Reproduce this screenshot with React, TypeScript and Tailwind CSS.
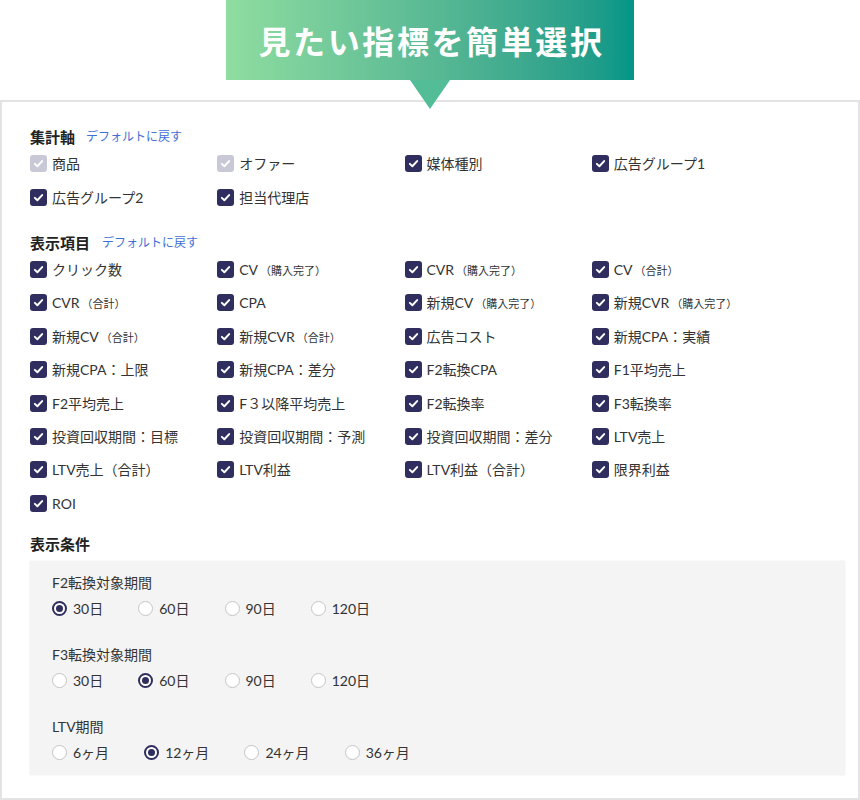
import React from "react";

type Item = { label: React.ReactNode; disabled?: boolean };

const Small = ({ children }: { children: React.ReactNode }) => (
  <span className="text-[11px] ml-[2px]">{children}</span>
);

const axisItems: Item[] = [
  { label: "商品", disabled: true },
  { label: "オファー", disabled: true },
  { label: "媒体種別" },
  { label: "広告グループ1" },
  { label: "広告グループ2" },
  { label: "担当代理店" },
];

const displayItems: Item[] = [
  { label: "クリック数" },
  { label: <>CV<Small>（購入完了）</Small></> },
  { label: <>CVR<Small>（購入完了）</Small></> },
  { label: <>CV<Small>（合計）</Small></> },
  { label: <>CVR<Small>（合計）</Small></> },
  { label: "CPA" },
  { label: <>新規CV<Small>（購入完了）</Small></> },
  { label: <>新規CVR<Small>（購入完了）</Small></> },
  { label: <>新規CV<Small>（合計）</Small></> },
  { label: <>新規CVR<Small>（合計）</Small></> },
  { label: "広告コスト" },
  { label: "新規CPA：実績" },
  { label: "新規CPA：上限" },
  { label: "新規CPA：差分" },
  { label: "F2転換CPA" },
  { label: "F1平均売上" },
  { label: "F2平均売上" },
  { label: "F３以降平均売上" },
  { label: "F2転換率" },
  { label: "F3転換率" },
  { label: "投資回収期間：目標" },
  { label: "投資回収期間：予測" },
  { label: "投資回収期間：差分" },
  { label: "LTV売上" },
  { label: "LTV売上（合計）" },
  { label: "LTV利益" },
  { label: "LTV利益（合計）" },
  { label: "限界利益" },
  { label: "ROI" },
];

const CheckBox = ({ disabled }: { disabled?: boolean }) => (
  <span
    className={
      "flex h-[17px] w-[17px] shrink-0 items-center justify-center rounded-[3px] " +
      (disabled ? "bg-[#c9c8d6]" : "bg-[#2f2e5f]")
    }
  >
    <svg width="13" height="13" viewBox="0 0 16 16" fill="none">
      <path
        d="M3.5 8.5 L6.6 11.4 L12.5 5"
        stroke="white"
        strokeWidth="2.4"
        strokeLinecap="round"
        strokeLinejoin="round"
      />
    </svg>
  </span>
);

const CheckGrid = ({ items }: { items: Item[] }) => (
  <div className="grid w-[749px] grid-cols-4 auto-rows-[33.4px]">
    {items.map((it, i) => (
      <div key={i} className="flex items-center gap-[5px]">
        <CheckBox disabled={it.disabled} />
        <span className="whitespace-nowrap text-[14px] text-[#333]">{it.label}</span>
      </div>
    ))}
  </div>
);

const Title = ({ text, link, wide }: { text: string; link?: boolean; wide?: boolean }) => (
  <div className={"flex h-[20px] items-center " + (wide ? "gap-[12px]" : "gap-[11px]")}>
    <span className="text-[15px] font-bold text-[#222]">{text}</span>
    {link && <span className="text-[12px] text-[#3f6fd6]">デフォルトに戻す</span>}
  </div>
);

const Radio = ({ checked }: { checked?: boolean }) =>
  checked ? (
    <span className="flex h-[15px] w-[15px] shrink-0 items-center justify-center rounded-full border-2 border-[#2f2e5f] bg-white">
      <span className="h-[7px] w-[7px] rounded-full bg-[#2f2e5f]" />
    </span>
  ) : (
    <span className="h-[15px] w-[15px] shrink-0 rounded-full border border-[#c4c4c4] bg-white" />
  );

const RadioGroup = ({
  label,
  options,
  selected,
  first,
  wide,
}: {
  label: string;
  options: string[];
  selected: number;
  first?: boolean;
  wide?: boolean;
}) => (
  <div className={first ? "" : "mt-[26px]"}>
    <div className="flex h-[20px] items-center text-[14px] text-[#333]">{label}</div>
    <div className={"mt-[6px] flex h-[20px] items-center " + (wide ? "gap-[35px]" : "gap-[35px]")}>
      {options.map((o, i) => (
        <div key={i} className="flex items-center gap-[6px]">
          <Radio checked={i === selected} />
          <span className="text-[14px] text-[#333]">{o}</span>
        </div>
      ))}
    </div>
  </div>
);

export default function App() {
  return (
    <div className="h-[800px] w-[860px] overflow-hidden bg-white font-['Lato','Noto_Sans_CJK_JP',sans-serif]">
      <div className="relative z-10 h-[100px]">
        <div className="relative mx-auto flex h-[80px] w-[408px] items-center justify-center bg-linear-to-r from-[#8fdda0] to-[#009687]">
          <span className="pl-[3px] font-['Noto_Sans_CJK_JP',sans-serif] text-[32px] font-bold tracking-[2.6px] text-white">
            見たい指標を簡単選択
          </span>
          <span className="absolute left-1/2 top-full h-0 w-0 -translate-x-1/2 border-l-[20px] border-r-[20px] border-t-[29px] border-l-transparent border-r-transparent border-t-[#52bd96]" />
        </div>
      </div>
      <div className="h-[700px] border-2 border-[#e3e3e3] pl-[28px] pr-[13px] pt-[25px]">
        <Title text="集計軸" link />
        <CheckGrid items={axisItems} />
        <div className="mt-[19px]">
          <Title text="表示項目" link wide />
        </div>
        <CheckGrid items={displayItems} />
        <div className="mt-[14px]">
          <Title text="表示条件" />
        </div>
        <div className="mt-[7px] bg-[#f4f4f4] px-[22px] py-[12px] shadow-[0_0_2px_rgba(0,0,0,0.08)]">
          <RadioGroup first label="F2転換対象期間" options={["30日", "60日", "90日", "120日"]} selected={0} />
          <RadioGroup label="F3転換対象期間" options={["30日", "60日", "90日", "120日"]} selected={1} />
          <RadioGroup label="LTV期間" options={["6ヶ月", "12ヶ月", "24ヶ月", "36ヶ月"]} selected={1} wide />
        </div>
      </div>
    </div>
  );
}
